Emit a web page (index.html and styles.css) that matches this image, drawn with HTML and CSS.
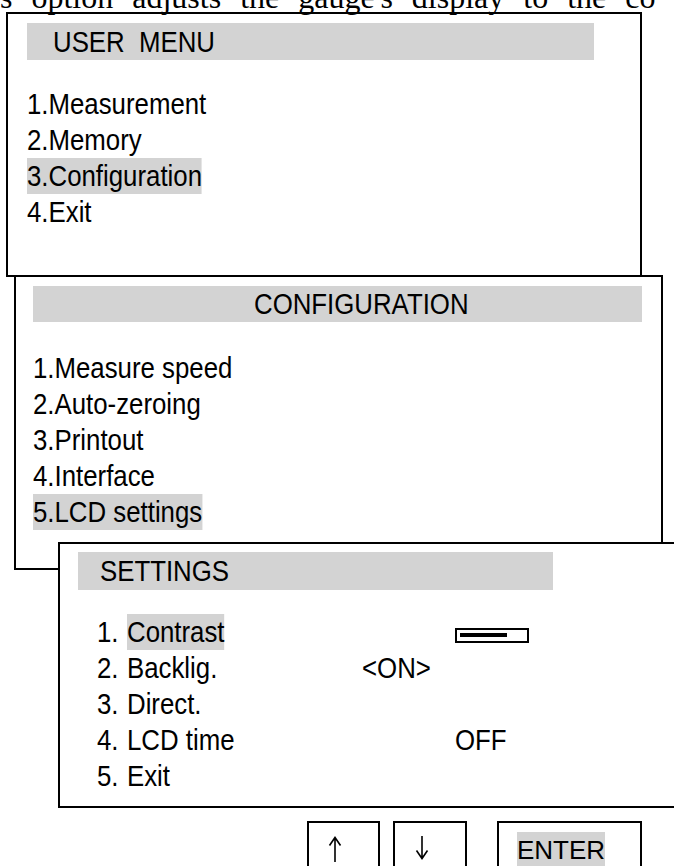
FILE: index.html
```html
<!DOCTYPE html>
<html lang="en">
<head>
<meta charset="utf-8">
<title>LCD settings menu</title>
<link rel="stylesheet" href="styles.css">
</head>
<body>
<div class="page">
  <p class="lead">s option adjusts the gauge's display to the co</p>

  <section class="win win-user">
    <div class="title"><span class="nar">USER&nbsp; MENU</span></div>
    <ul class="items">
      <li>1.Measurement</li>
      <li>2.Memory</li>
      <li><span class="hl">3.Configuration</span></li>
      <li>4.Exit</li>
    </ul>
  </section>

  <section class="win win-config">
    <div class="title"><span class="nar">CONFIGURATION</span></div>
    <ul class="items">
      <li>1.Measure speed</li>
      <li>2.Auto-zeroing</li>
      <li>3.Printout</li>
      <li>4.Interface</li>
      <li><span class="hl">5.LCD settings</span></li>
    </ul>
  </section>

  <section class="win win-settings">
    <div class="title"><span class="nar">SETTINGS</span></div>
    <div class="rows">
      <span class="cell">1.</span><span class="cell"><span class="hl">Contrast</span></span><span></span><span class="bar"><span class="bar-fill"></span></span>
      <span class="cell">2.</span><span class="cell">Backlig.</span><span class="cell">&lt;ON&gt;</span><span></span>
      <span class="cell">3.</span><span class="cell">Direct.</span><span></span><span></span>
      <span class="cell">4.</span><span class="cell">LCD time</span><span></span><span class="cell">OFF</span>
      <span class="cell">5.</span><span class="cell">Exit</span><span></span><span></span>
    </div>
  </section>

  <div class="keys">
    <div class="key key-up" aria-label="up">
      <svg class="arrow" width="16" height="26" viewBox="0 0 16 26" aria-hidden="true">
        <path d="M8 1.5V26M2.5 9.5L8 1.5L13.5 9.5" fill="none" stroke="#000" stroke-width="1.6"/>
      </svg>
    </div>
    <div class="key key-down" aria-label="down">
      <svg class="arrow" width="16" height="26" viewBox="0 0 16 26" aria-hidden="true">
        <path d="M8 0V22.5M2.5 14.5L8 22.5L13.5 14.5" fill="none" stroke="#000" stroke-width="1.6"/>
      </svg>
    </div>
    <div class="key key-enter"><span class="enter">ENTER</span></div>
  </div>
</div>
</body>
</html>
```

FILE: styles.css
```css
html, body {
  margin: 0;
  padding: 0;
  background: #fff;
}

body {
  font-family: "Liberation Sans", Arial, sans-serif;
  color: #000;
}

.page {
  width: 674px;
  height: 866px;
  overflow: hidden;
}

.lead {
  margin: -18px 0 0 0;
  height: 30px;
  font-family: "Liberation Serif", "Times New Roman", serif;
  font-size: 32px;
  line-height: 30px;
  white-space: nowrap;
  word-spacing: 11px;
}

.win {
  border: 2px solid #000;
  box-sizing: border-box;
  background: #fff;
}

/* condensed look: Arial-Narrow-like text */
.nar,
.items li,
.cell {
  display: inline-block;
  transform: scaleX(0.86);
  transform-origin: 0 50%;
  white-space: nowrap;
}

.items li {
  display: block;
}

.title {
  background: #d3d3d3;
  font-size: 30px;
  box-sizing: border-box;
  white-space: nowrap;
}

.items {
  list-style: none;
  padding: 0;
  font-size: 30px;
  line-height: 36px;
}

.hl {
  display: inline-block;
  background: #d3d3d3;
  height: 36px;
}

/* USER MENU */
.win-user {
  margin-left: 6px;
  width: 636px;
  height: 265px;
}

.win-user .title {
  margin: 9px 0 0 19px;
  width: 567px;
  height: 37px;
  line-height: 37px;
  padding-left: 26px;
}

.win-user .items {
  margin: 26px 0 0 19px;
}

/* CONFIGURATION */
.win-config {
  margin: -2px 0 0 14px;
  width: 649px;
  height: 295px;
}

.win-config .title {
  margin: 9px 0 0 17px;
  width: 609px;
  height: 36px;
  line-height: 36px;
  padding-left: 221px;
}

.win-config .items {
  margin: 28px 0 0 17px;
}

/* SETTINGS */
.win-settings {
  position: relative;
  margin: -28px 0 0 58px;
  width: 660px;
  height: 266px;
}

.win-settings .title {
  margin: 8px 0 0 18px;
  width: 475px;
  height: 38px;
  line-height: 38px;
  padding-left: 22px;
}

.rows {
  display: grid;
  grid-template-columns: 30px 235px 93px auto;
  grid-auto-rows: 36px;
  margin: 24px 0 0 37px;
  font-size: 30px;
  line-height: 36px;
  white-space: nowrap;
}

.bar {
  align-self: start;
  margin-top: 14px;
  width: 74px;
  height: 15px;
  border: 2px solid #000;
  box-sizing: border-box;
  padding: 3px 0 0 3px;
}

.bar-fill {
  display: block;
  width: 47px;
  height: 4px;
  background: #000;
}

/* keys */
.keys {
  display: flex;
  margin: 13px 0 0 307px;
}

.key {
  height: 60px;
  border: 2px solid #000;
  box-sizing: border-box;
}

.arrow {
  display: block;
}

.key-up {
  width: 73px;
  padding: 13px 0 0 18px;
}

.key-down {
  width: 74px;
  margin-left: 13px;
  padding: 13px 0 0 19px;
}

.key-enter {
  width: 145px;
  margin-left: 30px;
  padding: 9px 0 0 18px;
}

.enter {
  display: inline-block;
  background: #d3d3d3;
  font-size: 26px;
  height: 36px;
  line-height: 36px;
}
```
